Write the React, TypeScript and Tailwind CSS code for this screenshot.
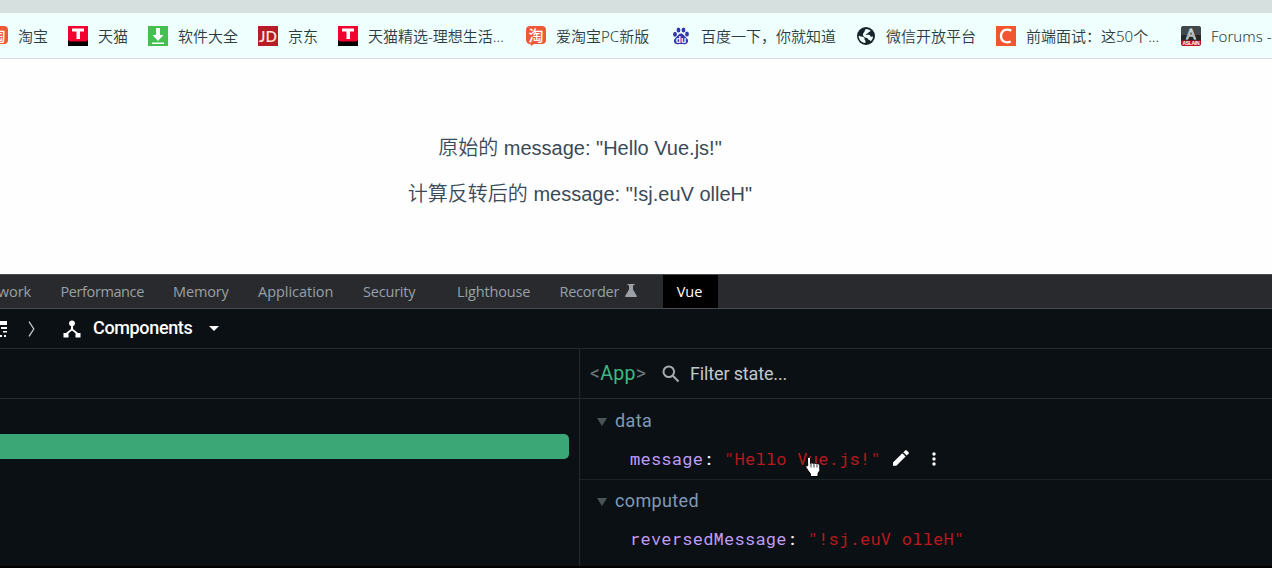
import type { ReactNode } from "react";

function Taobao() {
  return (
    <svg width="20" height="20" viewBox="0 0 20 20">
      <path d="M4 0h12a4 4 0 0 1 4 4v10a4 4 0 0 1-4 4H8l-3 2-.5-2A4 4 0 0 1 0 14V4a4 4 0 0 1 4-4z" fill="#ee5a37" />
      <text x="10" y="14.5" textAnchor="middle" fontSize="15" fontWeight="500" fill="#fff" fontFamily="Noto Sans CJK SC, sans-serif">淘</text>
    </svg>
  );
}

function Tmall() {
  return (
    <svg width="20" height="20" viewBox="0 0 20 20">
      <path d="M0 0h20v20H0z" fill="#f2022f" />
      <path d="M0 14q1 1.500 3 1.500h14q2 0 3-1.500v6H0z" fill="#000" />
      <path d="M4 2.500h12v3h-4v7.500h-3.500V5.500H4z" fill="#fff" />
    </svg>
  );
}

function Download() {
  return (
    <svg width="20" height="20" viewBox="0 0 20 20">
      <path d="M0 0h20v20H0z" fill="#45bf52" />
      <path d="M8 2h4v7h3.500L10 15 4.500 9H8zM4 16.500h12V18H4z" fill="#fff" />
    </svg>
  );
}

function Jd() {
  return (
    <svg width="20" height="20" viewBox="0 0 20 20">
      <path d="M0 0h20v20H0z" fill="#b81c26" />
      <text x="10" y="15.500" textAnchor="middle" fontSize="15" fontWeight="600" fill="#ffe6dc" fontFamily="Lato, sans-serif">JD</text>
    </svg>
  );
}

function Baidu() {
  return (
    <svg width="20" height="20" viewBox="0 0 20 20" fill="#3236ad">
      <ellipse cx="4" cy="8.300" rx="1.900" ry="2.500" />
      <ellipse cx="7.500" cy="4" rx="1.900" ry="2.600" />
      <ellipse cx="12.500" cy="4" rx="1.900" ry="2.600" />
      <ellipse cx="16" cy="8" rx="1.900" ry="2.500" />
      <path d="M10 7.500c2 0 3 2 4.500 3.500s3 2.500 2.500 4.500-2 3-4 2.700-4-.3-6 0-3.700-.8-4-2.700 1-3 2.500-4.500S8 7.500 10 7.500z" />
      <text x="10" y="16.500" textAnchor="middle" fontSize="8.500" fontWeight="700" fill="#fff" fontFamily="Liberation Sans, sans-serif">du</text>
    </svg>
  );
}

function Globe() {
  return (
    <svg width="20" height="20" viewBox="0 0 20 20">
      <circle cx="10" cy="10" r="9" fill="#15262b" />
      <path d="M2.800 9.500c1.200 1.300 3.700.8 5 1.700s.2 2.300 1.200 3 .3 1.700.3 2.800C5.500 16.800 2.300 13.500 2.800 9.500zM10 2.900c1.800 0 3.400.7 4.600 1.800-.5 1.300-1.900.9-2.400 2s-2.200.8-2.500 2c1.800.5 4-.4 4.500 1s1.700.8 2.800.8c-.1 2-.9 3.500-2.300 4.700-.5-1.600-2-.8-2.700-2.200-.8-1.600-3.400-1-4.500-2.700S7 7.500 8 6.300 8.700 3.400 10 2.900z" fill="#effffe" />
    </svg>
  );
}

function Csdn() {
  return (
    <svg width="20" height="20" viewBox="0 0 20 20">
      <path d="M0 0h20v20H0z" fill="#f05731" />
      <path d="M15.300 4.600C10 2 5 4.700 5 10.200c0 5.300 4.800 7.300 9.800 5.300" fill="none" stroke="#fff" strokeWidth="2.300" />
    </svg>
  );
}

function Aslain() {
  return (
    <svg width="20" height="20" viewBox="0 0 20 20">
      <rect width="20" height="20" rx="3" fill="#23272a" />
      <path d="M0 9V3a3 3 0 0 1 3-3h14a3 3 0 0 1 3 3v6z" fill="#41484b" />
      <path d="M0 14.500h20V17a3 3 0 0 1-3 3H3a3 3 0 0 1-3-3z" fill="#c81420" />
      <text x="10" y="13" textAnchor="middle" fontSize="14" fill="#23272a" stroke="#dfe5e5" strokeWidth=".8" fontFamily="Liberation Sans, sans-serif">A</text>
      <text x="10" y="19" textAnchor="middle" fontSize="5" fontWeight="700" fill="#fff" textLength="17" fontFamily="Liberation Sans, sans-serif">ASLAIN</text>
    </svg>
  );
}

const bookmarks = [
  { icon: <Taobao />, label: "淘宝", width: "w-[80px]" },
  { icon: <Tmall />, label: "天猫", width: "w-[80px]" },
  { icon: <Download />, label: "软件大全", width: "w-[110px]" },
  { icon: <Jd />, label: "京东", width: "w-[80px]" },
  { icon: <Tmall />, label: "天猫精选-理想生活...", width: "w-[188px]" },
  { icon: <Taobao />, label: "爱淘宝PC新版", width: "w-[145px]" },
  { icon: <Baidu />, label: "百度一下，你就知道", width: "w-[185px]" },
  { icon: <Globe />, label: "微信开放平台", width: "w-[140px]" },
  { icon: <Csdn />, label: "前端面试：这50个...", width: "w-[185px]" },
  { icon: <Aslain />, label: "Forums -", width: "w-[160px]" },
];

const tabs = [
  { name: "Network", width: "w-[87px]", spacing: "tracking-normal" },
  { name: "Performance", width: "w-[112.500px]", spacing: "tracking-[-0.4px]" },
  { name: "Memory", width: "w-[85px]", spacing: "tracking-[-0.15px]" },
  { name: "Application", width: "w-[105px]", spacing: "tracking-[-0.03px]" },
  { name: "Security", width: "w-[94px]", spacing: "tracking-[-0.2px]" },
  { name: "Lighthouse", width: "w-[102.500px]", spacing: "tracking-[-0.15px]" },
];

function Section({ title, children }: { title: string; children: ReactNode }) {
  return (
    <div className="h-[80px] pt-[8px]">
      <div className="flex h-[26px] items-center pl-[17px] text-[18px] tracking-[0.35px] text-[#7f99b5]">
        <svg width="10" height="8" viewBox="0 0 10 8" className="mt-[3px] mr-2">
          <path d="M0 0h10L5 8z" fill="#4b5454" />
        </svg>
        {title}
      </div>
      <div className="mt-[13px] flex h-[26px] items-center whitespace-pre pl-[50px] font-['Roboto_Mono','DejaVu_Sans_Mono',monospace] text-[17px] tracking-[0.25px]">
        {children}
      </div>
    </div>
  );
}

export default function App() {
  return (
    <div className="flex h-[568px] w-[1272px] flex-col overflow-hidden bg-[#fefefe]">
      <div className="h-[13px] shrink-0 bg-[#d5e0df]" />

      {/* Bookmarks bar */}
      <div className="flex h-[46px] shrink-0 items-center overflow-hidden border-b border-[#d8dcdf] bg-[#effffe] font-['Noto_Sans','Noto_Sans_CJK_SC',sans-serif] text-[15px] text-[#2b3c42]">
        <div className="-ml-3 flex shrink-0">
          {bookmarks.map((b, i) => (
            <div key={i} className={`flex h-5 shrink-0 items-center gap-[10px] whitespace-nowrap ${b.width}`}>
              <span className="shrink-0">{b.icon}</span>
              <span className="leading-5 font-[350]">{b.label}</span>
            </div>
          ))}
        </div>
      </div>

      {/* Page */}
      <div className="flex h-[215px] shrink-0 flex-col items-center pt-[78px] pr-[112px] font-['Liberation_Sans','Noto_Sans_CJK_SC',sans-serif] text-[20px] leading-[23px] text-[#3a4a59]">
        <p className="font-[350]">原始的 message: "Hello Vue.js!"</p>
        <p className="mt-[23px] font-[350]">计算反转后的 message: "!sj.euV olleH"</p>
      </div>

      {/* DevTools tabs */}
      <div className="flex h-[35px] shrink-0 items-center border-y border-[#494c50] bg-[#292a2d] font-['Open_Sans',sans-serif] text-[14.500px] text-[#9aa0a6]">
        <div className="-ml-[26.500px] flex shrink-0">
          {tabs.map((t) => (
            <span key={t.name} className={`shrink-0 ${t.width} ${t.spacing}`}>{t.name}</span>
          ))}
        </div>
        <span className="flex w-[103.500px] shrink-0 items-center gap-[6px] tracking-[-0.25px]">
          Recorder
          <svg width="12" height="13" viewBox="0 0 12 13" fill="#9aa0a6" className="mb-[2px]">
            <path d="M2.500 0h7v1.300H8v4.200l3.700 6.200c.3.700 0 1.300-.7 1.300H1c-.7 0-1-.6-.7-1.300L4 5.500V1.300H2.500z" />
          </svg>
        </span>
        <span className="-ml-[0.500px] flex h-[33px] w-[55px] shrink-0 items-center justify-center bg-black pr-[1px] text-white">Vue</span>
      </div>

      {/* Vue panel */}
      <div className="flex h-[259px] shrink-0 flex-col bg-[#0b1015] font-['Roboto',sans-serif]">
        <div className="flex h-[40px] shrink-0 items-center border-b border-[#23292d] text-white">
          <svg width="7" height="16" viewBox="0 0 7 16" fill="#fff">
            <path d="M0 0h7v4H0zM1 6h6v2H1zM3 10h4v1.500H3zM0 14h2v2H0zM4 14h2v2H4z" />
          </svg>
          <svg width="8" height="16" viewBox="0 0 8 16" className="ml-[21px]" fill="none" stroke="#c4c8cb" strokeWidth="1.300">
            <path d="M1 .7 5.800 8 1 15.300" />
          </svg>
          <svg width="18" height="18" viewBox="0 0 18 18" className="ml-[26.500px]" fill="#fff">
            <circle cx="9" cy="3.300" r="2.900" />
            <path d="M8 4h2v5l5 4h2.500v4.500h-5v-4.200L9 10.500l-3.500 2.800v4.200h-5V13H3l5-4z" />
          </svg>
          <span className="mb-[2px] ml-[12.500px] w-[116px] text-[18px] font-medium tracking-[-0.350px]">Components</span>
          <svg width="10" height="5" viewBox="0 0 10 5" fill="#fff">
            <path d="M0 0h10L5 5z" />
          </svg>
        </div>

        <div className="flex min-h-0 flex-1">
          <div className="w-[580px] shrink-0 border-r border-[#23292d]">
            <div className="h-[50px] border-b border-[#23292d]" />
            <div className="mt-[35px] h-[25px] w-[569px] rounded-r-[5px] bg-[#3ba776]" />
          </div>

          <div className="min-w-0 flex-1">
            <div className="flex h-[50px] items-center border-b border-[#23292d] pl-[10px]">
              <span className="w-[72px] text-[19.500px] tracking-[0.3px] text-[#3fb983]">
                <span className="text-[#6b7478]">&lt;</span>App<span className="text-[#6b7478]">&gt;</span>
              </span>
              <svg width="18" height="18" viewBox="0 0 18 18" fill="none" stroke="#a5abaf" strokeWidth="2">
                <circle cx="6.800" cy="6.800" r="5.300" />
                <path d="m10.800 10.800 5.700 5.700" />
              </svg>
              <span className="ml-[10px] text-[18px] tracking-[-0.150px] text-[#c1c8cc]">Filter state...</span>
            </div>

            <Section title="data">
              <span className="text-[#bf9cf5]">message</span>
              <span className="text-white">: </span>
              <span className="relative text-[#b8191d]">
                "Hello Vue.js!"
                <svg width="16" height="22" viewBox="0 0 16 22" className="absolute top-[10px] left-[81px]">
                  <path
                    d="M2.500 2Q4 0 5.500 2v5.500l1.500-.7 1.500.7 1.500-.5 1.500.8 1.500-.3 1.800 1.500v5.500L13 17.500v3H5.500V18L3 14.500.7 11q0-2.200 2-1.200z"
                    fill="#fff"
                    stroke="#000"
                    strokeWidth="1"
                  />
                  <path d="M6 8v3.500M9 8v3.500M12 8.500v3" stroke="#000" strokeWidth=".8" />
                </svg>
              </span>
              <svg width="16" height="16" viewBox="0 0 16 16" className="mb-[2px] ml-3" fill="#fff">
                <path d="M0 12.500 9.300 3.200l3.300 3.300L3.300 15.800H0zM10.300 2.200 12.200.4q.8-.6 1.500 0l1.900 1.900q.6.700 0 1.400l-1.900 1.900z" />
              </svg>
              <svg width="4" height="14" viewBox="0 0 4 14" className="mb-px ml-[23px]" fill="#fff">
                <circle cx="2" cy="2" r="1.700" />
                <circle cx="2" cy="7" r="1.700" />
                <circle cx="2" cy="12" r="1.700" />
              </svg>
            </Section>
            <div className="-mb-px h-px bg-[#1d2428]" />
            <Section title="computed">
              <span className="text-[#bf9cf5]">reversedMessage</span>
              <span className="text-white">: </span>
              <span className="text-[#b8191d]">"!sj.euV olleH"</span>
            </Section>
          </div>
        </div>
        <div className="h-[2px] shrink-0 bg-black" />
      </div>
    </div>
  );
}
